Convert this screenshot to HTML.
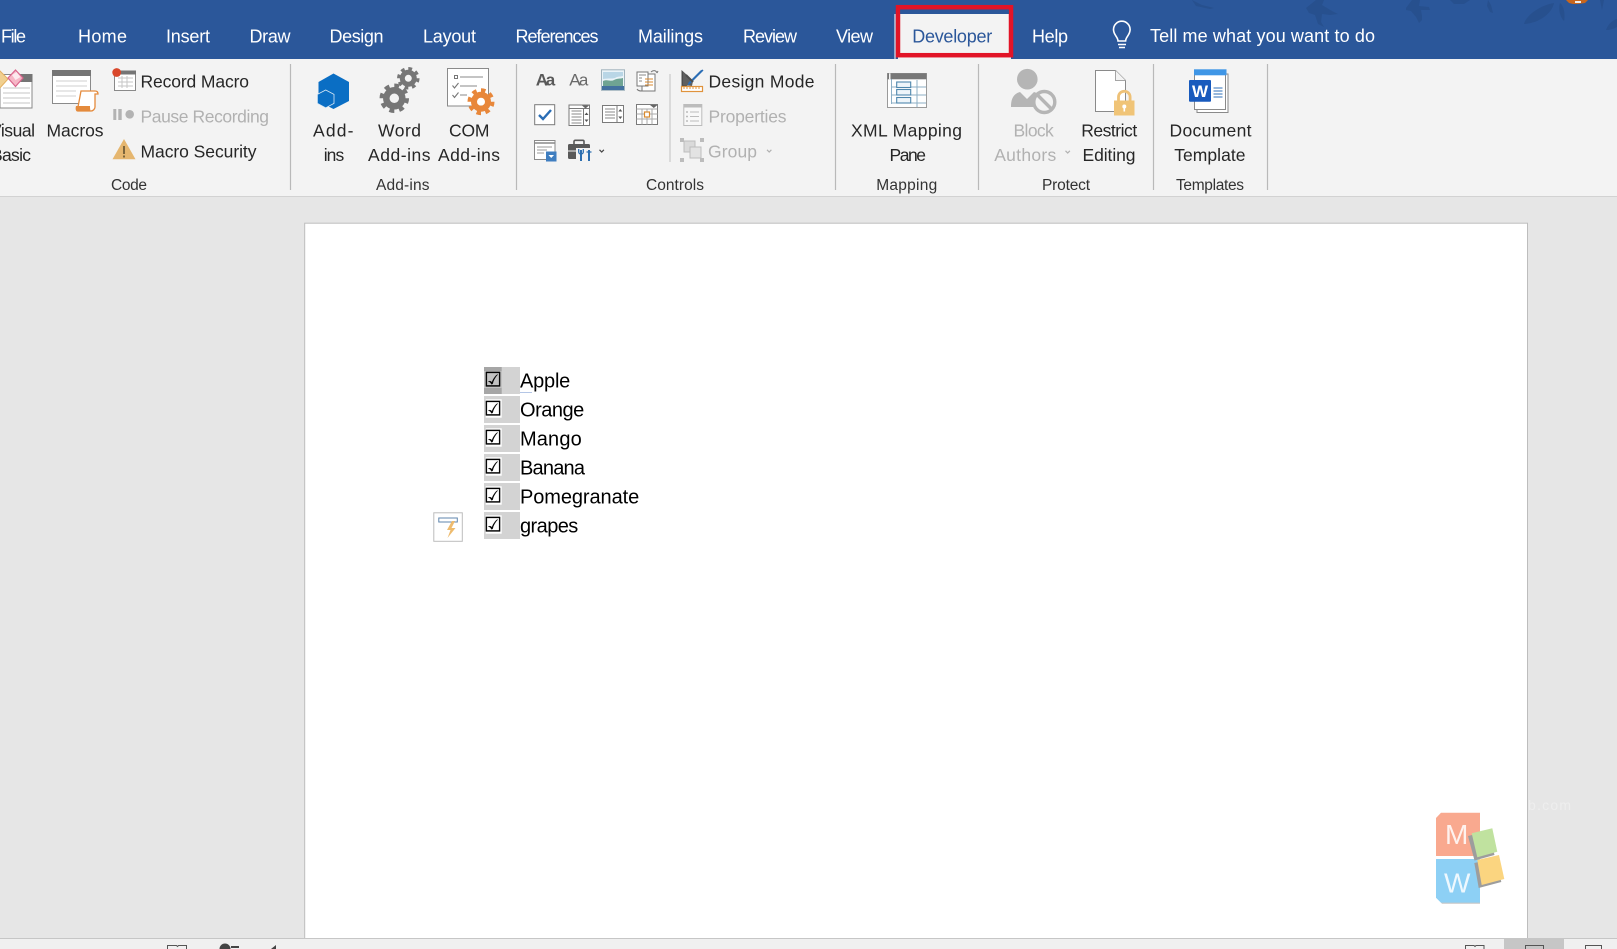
<!DOCTYPE html>
<html lang="en">
<head>
<meta charset="utf-8">
<title>Developer tab</title>
<style>
html,body{margin:0;padding:0;width:1617px;height:949px;overflow:hidden;background:#e6e6e6}
svg{display:block;position:absolute;left:0;top:0}
text{font-family:"Liberation Sans",Arial,sans-serif;font-size:17.5px;fill:#262626}
.tab{fill:#fff;font-size:18px}
.dis{fill:#b1b1b1}
.grp{font-size:15.5px;fill:#333}
.doc{font-size:20px;fill:#000}
.sep{stroke:#b9b9b9;stroke-width:1.2}
.ck{font-family:"DejaVu Sans",sans-serif;font-size:20px;fill:#000;stroke:#000;stroke-width:.25}
</style>
</head>
<body>
<svg width="1617" height="949" viewBox="0 0 1617 949" xmlns="http://www.w3.org/2000/svg">
<!-- title bar -->
<rect width="1617" height="59" fill="#2b579a"/>
<g fill="#27508e">
<path d="M1192 0l10 5 12 3 -4 1 -14-3z"/>
<path d="M1306 8l10-8 8 0-2 5 10 6 6 3-8 1-8-1-1 8 3 5-6-3-3-9-6-2z"/>
<path d="M1406 8l6-8 8 0-1 6 10 1 1 3-9 0 1 6 0 4-3 3-3-6-5-6-5-1z"/>
<path d="M1450 0h20l-6 4h-10z"/>
<path d="M1488 0l3 5 2 8-3-1-3-6z"/>
<path d="M1524 24c2-8 14-18 30-21-2 10-14 20-30 21z"/>
<path d="M1560 3c5 4 5 14 4 18-4-4-6-12-4-18z"/>
<path d="M1606 30c2-6 7-10 11-11v8c-4 2-7 3-11 3z"/>
<path d="M1600 0h4l-2 10z"/>
</g>
<path d="M1566 0h22l-3 3-7 1-5 0-4-1z" fill="#c8661e"/>
<rect x="1575" y="1" width="6" height="2" fill="#eee"/>
<!-- tabs -->
<text class="tab" x="1" y="42.5" textLength="25">File</text>
<text class="tab" x="78" y="42.5" textLength="49">Home</text>
<text class="tab" x="166" y="42.5" textLength="44">Insert</text>
<text class="tab" x="249.5" y="42.5" textLength="41">Draw</text>
<text class="tab" x="329.5" y="42.5" textLength="54">Design</text>
<text class="tab" x="423" y="42.5" textLength="53">Layout</text>
<text class="tab" x="515.5" y="42.5" textLength="83">References</text>
<text class="tab" x="638" y="42.5" textLength="65">Mailings</text>
<text class="tab" x="743" y="42.5" textLength="54">Review</text>
<text class="tab" x="836" y="42.5" textLength="37">View</text>
<text class="tab" x="1032" y="42.5" textLength="36">Help</text>
<text class="tab" x="1150" y="42" textLength="225">Tell me what you want to do</text>
<!-- bulb -->
<g fill="none" stroke="#fff" stroke-width="1.6">
<path d="M1118 41c0-4-4.500-6-4.500-11.500a8.300 8.300 0 0 1 16.600 0c0 5.500-4.500 7.500-4.500 11.500z"/>
<path d="M1118 44.500h8M1119 47.500h6"/>
</g>
<!-- ribbon -->
<rect y="59" width="1617" height="137" fill="#f3f3f3"/>
<rect y="196" width="1617" height="1" fill="#d2d2d2"/>
<!-- developer tab -->
<rect x="894.500" y="14" width="1" height="45" fill="#fff"/>
<rect x="898" y="14" width="113" height="45" fill="#f3f3f3"/>
<rect x="898" y="7.200" width="113" height="48" fill="none" stroke="#e21427" stroke-width="4.500"/>
<rect x="900.200" y="9.500" width="108.600" height="4.500" fill="#2b579a"/>
<text class="tab" style="fill:#2b579a" x="912.200" y="42.700" textLength="80">Developer</text>
<!-- separators -->
<path class="sep" d="M290.500 64V190M516.500 64V190M835.500 64V190M978.500 64V190M1153.500 64V190M1267.500 64V190"/>
<path class="sep" d="M670 74V162" stroke-opacity=".7"/>
<!-- ribbon text -->
<text x="-10" y="136.500" textLength="45">Visual</text>
<text x="-9" y="161" textLength="40">Basic</text>
<text x="46.500" y="136.500" textLength="57">Macros</text>
<text x="140.500" y="87.300" textLength="108.500">Record Macro</text>
<text class="dis" x="140.500" y="122.500" textLength="128.500">Pause Recording</text>
<text x="140.500" y="157.300" textLength="116">Macro Security</text>
<text class="grp" x="111" y="190" textLength="36">Code</text>

<text x="313" y="136.500" textLength="40.500">Add-</text>
<text x="323.700" y="161" textLength="20.500">ins</text>
<text x="378" y="136.500" textLength="43">Word</text>
<text x="368" y="161" textLength="62.500">Add-ins</text>
<text x="449" y="136.500" textLength="40.500">COM</text>
<text x="438" y="161" textLength="62">Add-ins</text>
<text class="grp" x="376" y="190" textLength="53.500">Add-ins</text>

<text x="708.500" y="87.300" textLength="106">Design Mode</text>
<text class="dis" x="708.500" y="122.500" textLength="78">Properties</text>
<text class="dis" x="708" y="157.300" textLength="49">Group</text>
<text class="grp" x="646" y="190" textLength="58">Controls</text>

<text x="851" y="136.500" textLength="111">XML Mapping</text>
<text x="889.500" y="161" textLength="36.500">Pane</text>
<text class="grp" x="876.200" y="190" textLength="61">Mapping</text>

<text class="dis" x="1013.500" y="136.500" textLength="40.300">Block</text>
<text class="dis" x="994.200" y="161" textLength="62">Authors</text>
<text x="1081.200" y="136.500" textLength="56">Restrict</text>
<text x="1082.500" y="161" textLength="53">Editing</text>
<text class="grp" x="1042" y="190" textLength="48">Protect</text>

<text x="1169.500" y="136.500" textLength="82">Document</text>
<text x="1174.200" y="161" textLength="71.300">Template</text>
<text class="grp" x="1176" y="190" textLength="68">Templates</text>

<!-- chevrons -->
<g fill="none" stroke-width="1.200">
<path d="M599.500 149.800l2.200 2.200 2.200-2.200" stroke="#444"/>
<path d="M767 149.800l2.200 2.200 2.200-2.200" stroke="#b1b1b1"/>
<path d="M1065.500 150.800l2.200 2.200 2.200-2.200" stroke="#b1b1b1"/>
</g>

<!-- Visual Basic icon -->
<rect x="0" y="74.500" width="32" height="33.500" fill="#fff" stroke="#8a8a8a"/>
<rect x="20" y="74" width="12.500" height="8" fill="#757575"/>
<path d="M3 88h27M3 93h27M3 98h27M3 103h27" stroke="#c4c4c4"/>
<path d="M-2 69l10 10-9 10-8-9z" fill="#f0cf8f" stroke="#e4b060"/>
<path d="M15.500 70l7.500 8-7.500 8.500-7.500-8.500z" fill="#f6b6c6" stroke="#d9648c" stroke-width="1.200"/>
<path d="M12 75l4.500-3 4 5-5 3z" fill="#fff" opacity=".7"/>
<!-- Macros icon -->
<rect x="52.500" y="70.500" width="38" height="33" fill="#fff" stroke="#8a8a8a"/>
<rect x="52" y="70" width="39" height="6" fill="#757575"/>
<path d="M56 81h31M56 86h31M56 91h20M56 96h20" stroke="#cfcfcf"/>
<path d="M81 91h14c2 0 3 1 3 3h-3v13c0 2-2 4-4 4H78c-2 0-2-3 0-4z" fill="#fff" stroke="#e48a3c" stroke-width="1.300"/>
<path d="M76 106h14c0 2 0 4 1 5.500H79c-3 0-4-2-3-5.500z" fill="#e48a3c"/>
<!-- Record macro -->
<rect x="114.500" y="71" width="21" height="19.500" fill="#fff" stroke="#8a8a8a"/>
<rect x="114" y="70.500" width="22" height="4" fill="#757575"/>
<path d="M118 78h15M118 82h15M118 86h15M122 76v12M127 76v12" stroke="#c6c6c6"/>
<circle cx="116.700" cy="72.500" r="4.400" fill="#d9472b"/>
<!-- Pause -->
<rect x="113.300" y="109" width="3" height="11" fill="#b3b3b3"/>
<rect x="118.300" y="109" width="3.400" height="11" fill="#b3b3b3"/>
<circle cx="129.700" cy="114.300" r="4.300" fill="#b3b3b3"/>
<!-- Warning -->
<path d="M124 139l11.500 20.300h-23z" fill="#e5b66f"/>
<path d="M124 146v8M124 155.500v2" stroke="#5a4a2c" stroke-width="1.500"/>

<!-- Add-ins hex -->
<path d="M333.500 73.500L349 82v19l-15.500 8-8-4-7-10V82z" fill="#0a6ec4"/>
<path d="M325.700 90l8.300 4.400v9l-8.300 4.400-8.300-4.400v-9z" fill="#0a6ec4" stroke="#d8e8f5" stroke-width=".8"/>
<!-- Word add-ins gears -->
<g fill="none" stroke="#767676">
<circle cx="408.300" cy="78.300" r="6" stroke-width="5"/>
<circle cx="408.300" cy="78.300" r="9" stroke-width="4.500" pathLength="16" stroke-dasharray="1 1"/>
<circle cx="394.300" cy="98.300" r="8" stroke-width="6.500"/>
<circle cx="394.300" cy="98.300" r="12" stroke-width="5.500" pathLength="16" stroke-dasharray="1 1"/>
</g>
<!-- COM add-ins -->
<rect x="447.500" y="68.500" width="41" height="37.500" fill="#fff" stroke="#8a8a8a"/>
<rect x="454.500" y="75.500" width="3" height="3" fill="none" stroke="#777"/>
<path d="M460 77h23M460 86h17M460 95h7" stroke="#8a8a8a"/>
<path d="M452.500 85.500l2 2.500 4-5M452.500 95l2 2.500 4-5" fill="none" stroke="#777" stroke-width="1.100"/>
<g fill="none" stroke="#e8873a">
<circle cx="481" cy="101.700" r="7" stroke-width="6"/>
<circle cx="481" cy="101.700" r="11" stroke-width="5" pathLength="16" stroke-dasharray="1 1"/>
</g>

<!-- Controls -->
<text x="535.700" y="85.300" textLength="19.500" style="font-weight:700;font-size:17px;fill:#595959">Aa</text>
<text x="569.300" y="85.300" textLength="19" style="font-size:17px;fill:#6a6a6a">Aa</text>
<!-- picture -->
<rect x="601.500" y="69.800" width="23" height="20.500" fill="#eaf3f8" stroke="#a1b3bd"/>
<path d="M603 72h20v4c-3 1-5 0-8 2-3 1-6 0-12 1z" fill="#b9d6e6"/>
<path d="M603 81c5-2 7 1 11-1 4-2 6-1 9-2v8h-20z" fill="#6fa493"/>
<rect x="602" y="86" width="22" height="4" fill="#43719f"/>
<!-- building block -->
<rect x="642" y="74" width="13" height="17" fill="#fff" stroke="#777"/>
<rect x="637" y="72" width="11" height="14" fill="#fff" stroke="#777"/>
<path d="M645 79h8M645 82h8M645 85h8" stroke="#d98a2f"/>
<path d="M639 75h7M639 78h3M639 81h3" stroke="#888"/>
<path d="M651 72c2-2 5-2 6 1M657 73l1-2M637 89c1 2 3 2 5 2" fill="none" stroke="#777"/>
<!-- checkbox -->
<rect x="534.700" y="104.700" width="20" height="20" fill="#fff" stroke="#7a7a7a"/>
<path d="M539 115l4 4 8-9" fill="none" stroke="#2a6db5" stroke-width="2.400"/>
<!-- combo -->
<rect x="569" y="105" width="20.500" height="20.500" fill="#fff" stroke="#7a7a7a"/>
<rect x="569" y="105" width="20.500" height="3.500" fill="#fff" stroke="#7a7a7a"/>
<path d="M582 105.500h7l-3.500 3z" fill="#666"/>
<path d="M571.500 111h10M571.500 114h10M571.500 117h10M571.500 120h10M571.500 123h10" stroke="#888"/>
<path d="M583.500 108v17" stroke="#7a7a7a"/>
<path d="M586.500 112.500l-2 2.500h4zM586.500 122l-2-2.500h4z" fill="#555"/>
<!-- list -->
<rect x="602.500" y="105.500" width="21" height="17" fill="#fff" stroke="#7a7a7a"/>
<path d="M605 109h10M605 112h10M605 115h10M605 118h10" stroke="#888"/>
<path d="M617 105.500v17" stroke="#7a7a7a"/>
<path d="M620.300 109l-2 2.500h4zM620.300 119l-2-2.500h4z" fill="#555"/>
<!-- date -->
<rect x="636.500" y="104.500" width="21" height="20" fill="#fff" stroke="#7a7a7a"/>
<path d="M650 105h7.500l-3.700 3z" fill="#666"/>
<path d="M636.500 109h21M636.500 114h21M636.500 119h21M642 109v15.500M647 109v15.500M652 109v15.500" stroke="#aaa"/>
<rect x="644.500" y="112" width="5" height="5" fill="#fff" stroke="#d98a2f" stroke-width="1.200"/>
<!-- legacy -->
<rect x="534.500" y="140.500" width="20.500" height="19" fill="#fff" stroke="#8a8a8a"/>
<path d="M534.500 143h20.500" stroke="#888" stroke-width="1.500"/>
<path d="M537 147h15M537 150h10M537 153h7" stroke="#999"/>
<rect x="546" y="151.500" width="10.500" height="10" fill="#3f7ec0"/>
<path d="M548.500 155h5.500l-2.750 3z" fill="#fff"/>
<!-- tools -->
<rect x="568" y="144" width="22" height="15" rx="1.500" fill="#595959"/>
<path d="M574 144v-2.500a1.200 1.200 0 0 1 1.200-1.200h7.600a1.200 1.200 0 0 1 1.200 1.200V144" fill="none" stroke="#595959" stroke-width="1.600"/>
<rect x="568" y="150.500" width="22" height="1" fill="#f3f3f3"/>
<rect x="576" y="148" width="16" height="14" fill="#f3f3f3"/>
<path d="M581 150v11M589 150v11" stroke="#2d6fb0" stroke-width="2"/>
<path d="M578.700 149v3c0 1 1 2 2.300 2s2.300-1 2.300-2v-3M586.500 152h5" fill="none" stroke="#2d6fb0" stroke-width="1.300"/>
<!-- design mode -->
<path d="M681.500 70v20l12-9z" fill="#4d4d4d"/>
<path d="M683 72l10 9 -1 5-9-1z" fill="#5f5f5f"/>
<path d="M690 84l12-12 1.500-1.500-1-1 -2 1-12 12-1 3z" fill="#2a6db5"/>
<path d="M686 75l7 7" stroke="#4d4d4d" stroke-width="2"/>
<rect x="681.500" y="86.500" width="21" height="5" fill="#fff" stroke="#e0933c" stroke-width="1.200"/>
<path d="M684 87v2M687 87v2M690 87v2M693 87v2M696 87v2M699 87v2" stroke="#e0933c"/>
<!-- properties -->
<rect x="683.800" y="104.500" width="18" height="21" fill="#f8f8f8" stroke="#bcbcbc"/>
<rect x="683.800" y="104" width="18" height="3.500" fill="#bcbcbc"/>
<path d="M690 112h9M690 116.500h9M690 121h9" stroke="#bcbcbc"/>
<path d="M686 112h2M686 116.500h2M686 121h2" stroke="#bcbcbc" stroke-width="1.500"/>
<!-- group -->
<rect x="684" y="141" width="11" height="11" fill="#dadada" stroke="#bcbcbc"/>
<rect x="690" y="147" width="11" height="11" fill="#e3e3e3" stroke="#bcbcbc"/>
<g fill="#bcbcbc"><rect x="680" y="138" width="4" height="4"/><rect x="700" y="138" width="4" height="4"/><rect x="680" y="158" width="4" height="4"/><rect x="700" y="158" width="4" height="4"/></g>

<!-- XML pane -->
<rect x="887.500" y="73.500" width="39" height="34" fill="#fff" stroke="#9a9a9a"/>
<rect x="887.500" y="73.300" width="39" height="6" fill="#777"/>
<rect x="889" y="73.300" width="1.500" height="6" fill="#f3f3f3"/>
<path d="M891.500 79v25M891.500 87h5M891.500 95h5M891.500 103h5M911 87h15M911 95h15M911 103h15M917 80v27" stroke="#6f9bb8" stroke-opacity=".8"/>
<g fill="#eef5fa" stroke="#4f87ad" stroke-width="1.100"><rect x="896.700" y="82" width="14" height="5.500"/><rect x="896.700" y="89.500" width="14" height="5.500"/><rect x="896.700" y="97.500" width="14" height="5.500"/></g>

<!-- Block authors -->
<circle cx="1027.300" cy="79.200" r="10.300" fill="#b5b5b5"/>
<path d="M1011 107c0-8 2-13 9-15l7 7 7-7c3 1 5 2 7 3l-5 12z" fill="#b5b5b5"/>
<circle cx="1044.300" cy="102" r="10.500" fill="#f3f3f3" stroke="#b5b5b5" stroke-width="3.400"/>
<path d="M1037 94.500l14.500 14.500" stroke="#b5b5b5" stroke-width="3.400"/>

<!-- Restrict editing -->
<path d="M1095.500 70.500h20l10 10v31h-30z" fill="#fff" stroke="#8a8a8a"/>
<path d="M1115.500 70.500v10h10" fill="#f3f3f3" stroke="#a5a5a5"/>
<path d="M1118.500 101v-4a5.800 5.800 0 0 1 11.600 0v4" fill="none" stroke="#eec177" stroke-width="2.800"/>
<rect x="1114" y="100.500" width="20.500" height="15" fill="#f0c477"/>
<circle cx="1124.300" cy="106.500" r="2" fill="#fff"/><rect x="1123.500" y="107" width="1.600" height="4.500" fill="#fff"/>

<!-- Document template -->
<rect x="1197" y="74" width="31" height="38.500" fill="#fff" stroke="#8a8a8a"/>
<rect x="1194.500" y="71" width="31" height="38.500" fill="#fff" stroke="#8a8a8a"/>
<rect x="1194" y="69.300" width="32.500" height="6" fill="#3f96e6"/>
<rect x="1189" y="80" width="22" height="21.700" rx="1" fill="#185abd"/>
<text x="1192" y="97" textLength="16" style="font-weight:700;font-size:17px;fill:#fff">W</text>
<path d="M1213.500 88h9M1213.500 91h9M1213.500 94h9M1213.500 97h9" stroke="#2c6fb8"/>

<!-- workspace -->
<rect y="197" width="1617" height="741" fill="#e6e6e6"/>
<rect x="304.700" y="223.200" width="1222.800" height="720" fill="#fff" stroke="#bdbdbd"/>
<text x="1528" y="810" textLength="43" style="font-size:14px;fill:#eeeeee">b.com</text>

<!-- checkbox rows -->
<g fill="#d3d3d3">
<rect x="484" y="367" width="36" height="27"/>
<rect x="484" y="396" width="36" height="27"/>
<rect x="484" y="425" width="36" height="27"/>
<rect x="484" y="454" width="36" height="27"/>
<rect x="484" y="483" width="36" height="27"/>
<rect x="484" y="512" width="36" height="27"/>
</g>
<rect x="484" y="367" width="17.700" height="27" fill="#a6a6a6"/>
<rect x="484" y="371" width="17.700" height="17" fill="#c2c2c2"/>
<g fill="#fff">
<rect x="485.700" y="399.300" width="16" height="18.400"/>
<rect x="485.700" y="428.300" width="16" height="18.400"/>
<rect x="485.700" y="457.300" width="16" height="18.400"/>
<rect x="485.700" y="486.300" width="16" height="18.400"/>
<rect x="485.700" y="515.300" width="16" height="18.400"/>
</g>
<text class="ck" x="484" y="386.500">☑</text>
<text class="ck" x="484" y="415.500">☑</text>
<text class="ck" x="484" y="444.500">☑</text>
<text class="ck" x="484" y="473.500">☑</text>
<text class="ck" x="484" y="502.500">☑</text>
<text class="ck" x="484" y="531.500">☑</text>
<text class="doc" x="520" y="387.700" textLength="50.300">Apple</text>
<text class="doc" x="520" y="416.700" textLength="64.300">Orange</text>
<text class="doc" x="520" y="445.700" textLength="61.700">Mango</text>
<text class="doc" x="520" y="474.700" textLength="65">Banana</text>
<text class="doc" x="520" y="503.700" textLength="119.200">Pomegranate</text>
<text class="doc" x="520" y="532.700" textLength="58.300">grapes</text>
<path d="M520 392.500h12" stroke="#b4c6e6" stroke-width="1"/>
<!-- smart tag -->
<rect x="433.800" y="512.800" width="28.500" height="28.500" fill="#fff" stroke="#bcbcbc"/>
<rect x="438.800" y="518" width="18.500" height="4" fill="#fff" stroke="#5f86ad"/>
<path d="M452 521l-5 9h3.500l-3 8 8-10h-4l3.500-7z" fill="#eebb6e"/>

<!-- logo -->
<path d="M1441 812.700h39V856h-44v-38z" fill="#f9a98f"/>
<path d="M1436 859h44v43.700h-39l-5-5z" fill="#8dd0f5"/>
<path d="M1441 902.700h39v.800h-38z" fill="#a8a8a8"/>
<text x="1445" y="844" textLength="22.700" style="font-size:28px;fill:#fff;fill-opacity:.85">M</text>
<text x="1444" y="892.300" textLength="25" style="font-size:28px;fill:#fff;fill-opacity:.85">W</text>
<path d="M1468 836l20.500-5 6 24-20 5.500z" fill="#9d9d9d"/>
<path d="M1471.700 833.300l20.600-5 5 23.400-20 5.600z" fill="#c0e29f"/>
<path d="M1474.300 863l21.700-5 5.300 24-22.600 6z" fill="#9d9d9d"/>
<path d="M1477.300 860l21.700-5 5.300 24-22.600 6z" fill="#fbd580"/>

<!-- status bar -->
<rect y="938" width="1617" height="11" fill="#f0f0f0"/>
<rect y="938" width="1617" height="1" fill="#c6c6c6"/>
<rect x="1504" y="939" width="60" height="10" fill="#c6c6c6"/>
<g fill="none" stroke="#555" stroke-width="1">
<path d="M167.500 949v-3.500h9l1 1 1-1h8v3.500"/>
<path d="M1465.500 949v-3.500h8.500l1 1 1-1h8v3.500"/>
<path d="M1525.500 949v-3.500h18v3.500"/>
<path d="M1585.500 949v-3.500h16v3.500"/>
</g>
<circle cx="225" cy="949" r="5.500" fill="#444"/>
<rect x="231" y="946" width="8" height="2" fill="#444"/>
<path d="M271 949l5-4v4z" fill="#444"/>
</svg>
</body>
</html>
